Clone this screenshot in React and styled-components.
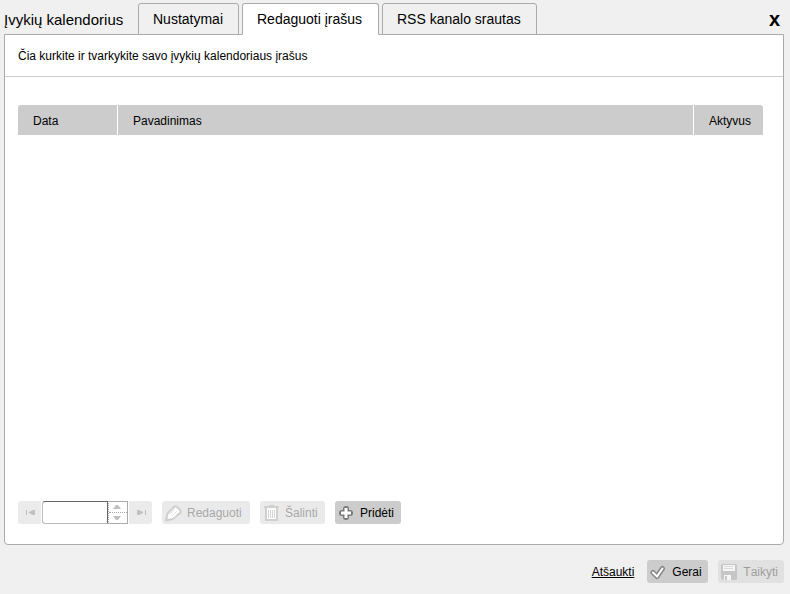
import React, { useState } from "react";
import styled, { createGlobalStyle } from "styled-components";

const GlobalStyle = createGlobalStyle`
  *, *::before, *::after { box-sizing: border-box; }
  body {
    margin: 0;
    background: #f0f0f0;
    color: #000;
    font: 12px/14px "Liberation Sans", Arial, sans-serif;
    font-kerning: none;
  }
  button, input { font: inherit; font-kerning: none; color: inherit; }
`;

const Dialog = styled.div`
  display: flex;
  flex-direction: column;
  min-height: 100vh;
  padding: 3px 6px 11px 4px;
`;

const TopBar = styled.header`
  display: flex;
  align-items: flex-start;
`;

const Title = styled.h1`
  min-width: 134px;
  margin: 8px 0 0;
  font-size: 15px;
  line-height: 18px;
  font-weight: normal;
  white-space: nowrap;
`;

const Tabs = styled.nav`
  display: flex;
  gap: 3px;
  flex: 1;
`;

const Tab = styled.button`
  height: 32px;
  min-width: ${(p) => p.$minWidth};
  margin-bottom: -1px;
  padding: 0 14px;
  border: 1px solid #aaa;
  border-bottom-color: ${(p) => (p.$active ? "#fff" : "#aaa")};
  border-radius: 3px 3px 0 0;
  background: ${(p) => (p.$active ? "#fff" : "#f0f0f0")};
  font-size: 14px;
  line-height: 30px;
  text-align: left;
  white-space: nowrap;
  z-index: 1;
`;

const CloseButton = styled.button`
  margin: 4px 4px 0 0;
  padding: 0;
  border: 0;
  background: none;
  font-size: 20px;
  line-height: 24px;
  font-weight: bold;
`;

const Panel = styled.main`
  display: flex;
  flex-direction: column;
  flex: 1;
  border: 1px solid #aaa;
  border-radius: 0 0 4px 4px;
  background: #fff;
`;

const Intro = styled.p`
  margin: 0;
  padding: 14px 13px 13px;
  border-bottom: 1px solid #ccc;
`;

const Content = styled.div`
  display: flex;
  flex-direction: column;
  justify-content: space-between;
  flex: 1;
  padding: 28px 20px 20px 13px;
`;

const Table = styled.table`
  width: 100%;
  border-collapse: separate;
  border-spacing: 0;
  table-layout: fixed;
`;

const HeadCell = styled.th`
  width: ${(p) => p.$width || "auto"};
  height: 30px;
  padding: 2px 0 0 15px;
  background: #ccc;
  font-weight: normal;
  text-align: left;
  border-right: 1px solid #fff;
  &:first-child { border-top-left-radius: 3px; }
  &:last-child { border-top-right-radius: 3px; border-right: 0; }
`;

const Toolbar = styled.div`
  display: flex;
  gap: 10px;
`;

const Pager = styled.div`
  display: flex;
  gap: 1px;
`;

const PagerButton = styled.button`
  display: flex;
  align-items: center;
  justify-content: center;
  width: 23px;
  height: 23px;
  padding: 0 0 0 2px;
  border: 0;
  border-radius: ${(p) => (p.$end ? "0 3px 3px 0" : "3px 0 0 3px")};
  background: #ebebeb;
`;

const PageField = styled.div`
  display: flex;
`;

const PageInput = styled.input`
  width: 66px;
  height: 23px;
  padding: 0 4px;
  border: 1px solid #bbb;
  border-top-color: #666;
  border-right-color: #666;
  border-radius: 3px 0 0 3px;
  background: #fff;
`;

const Spinner = styled.div`
  display: flex;
  flex-direction: column;
  width: 20px;
  height: 23px;
  border: 1px solid #aaa;
  border-left: 1px dotted #aaa;
`;

const SpinButton = styled.button`
  display: flex;
  flex: 1;
  align-items: center;
  justify-content: center;
  padding: 0 2px 0 0;
  border: 0;
  background: none;
  & + & { border-top: 1px dotted #aaa; }
`;

const ActionButton = styled.button`
  display: flex;
  align-items: center;
  gap: 5px;
  height: 23px;
  min-width: ${(p) => p.$minWidth};
  padding: 1px 6px 0 3px;
  border: 0;
  border-radius: 3px;
  background: #ccc;
  white-space: nowrap;
  &:disabled { opacity: 0.4; color: #222; }
`;

const Icon = styled.svg`
  display: block;
  flex: none;
`;

const Footer = styled.footer`
  display: flex;
  align-items: center;
  justify-content: flex-end;
  gap: 10px;
  padding-top: 15px;
`;

const CancelLink = styled.a`
  margin: 1px 3px 0 0;
  color: #000;
  text-decoration: underline;
`;

const PencilIcon = () => (
  <Icon width="17" height="17" viewBox="0 0 17 17" aria-hidden="true">
    <path d="M1 15.5 2.5 8.5 9.5 1.5h2l4 4v2L8 14Z" fill="#fff" stroke="#888" strokeWidth="2" strokeLinejoin="round" />
    <path d="m5 9 5-5m-3 7 5-5m-3 7 4-5" stroke="#bbb" fill="none" />
    <path d="m0 16 1-4 3 3Z" fill="#888" />
  </Icon>
);

const TrashIcon = () => (
  <Icon width="17" height="17" viewBox="0 0 17 17" aria-hidden="true">
    <path d="M1 1h5V0h5v1h5v2H1Z" fill="#888" />
    <path d="M3 3v12h11V3" fill="#fff" stroke="#888" strokeWidth="2" />
    <path d="M3 15h11" stroke="#888" strokeWidth="2" />
    <path d="M5.5 5v8m2-8v8m2-8v8m2-8v8" stroke="#999" fill="none" />
  </Icon>
);

const PlusIcon = () => (
  <Icon width="17" height="17" viewBox="0 0 17 17" aria-hidden="true">
    <path d="M8 4v8M4 8h8" fill="none" stroke="#777" strokeWidth="6" strokeLinejoin="round" strokeLinecap="round" />
    <path d="M8 3v10M3 8h10" fill="none" stroke="#fff" strokeWidth="3" />
  </Icon>
);

const CheckIcon = () => (
  <Icon width="17" height="17" viewBox="0 0 17 17" aria-hidden="true">
    <path d="m3 8.5 4 4 5.5-8" fill="none" stroke="#888" strokeWidth="5" strokeLinejoin="round" strokeLinecap="round" />
    <path d="m3 8.5 4 4 5.5-8" fill="none" stroke="#fff" strokeWidth="2" strokeLinecap="round" />
  </Icon>
);

const SaveIcon = () => (
  <Icon width="17" height="17" viewBox="0 0 17 17" aria-hidden="true">
    <path d="M1 0h14l1 1v14l-1 1H2l-2-2V1Z" fill="#888" />
    <path d="M2 1h12v6H2Zm1 10h7v5H3Z" fill="#fff" />
    <path d="M3 2.5h9m-9 2h9" stroke="#bbb" />
    <path d="M4 12h2v4H4Z" fill="#888" />
  </Icon>
);

const StepIcon = ({ forward }) => (
  <Icon width="9" height="5" viewBox="0 0 9 5" aria-hidden="true">
    {forward ? (
      <path d="M0 0h2l2 1 2 1v1L4 4 2 5H0Zm8 0h1v5H8Z" fill="#c0c0c0" />
    ) : (
      <path d="M9 0H7L5 1 3 2v1l2 1 2 1h2ZM1 0H0v5h1Z" fill="#c0c0c0" />
    )}
  </Icon>
);

const ArrowIcon = ({ down }) => (
  <Icon width="8" height="4" viewBox="0 0 8 4" aria-hidden="true">
    <path d={down ? "M0 0h8L5 4H3Z" : "M0 4h8L5 0H3Z"} fill="#c0c0c0" />
  </Icon>
);

const TABS = [
  { label: "Nustatymai", minWidth: "101px" },
  { label: "Redaguoti įrašus", minWidth: "137px" },
  { label: "RSS kanalo srautas", minWidth: "155px" },
];

export default function App() {
  const [active, setActive] = useState(1);
  const [page, setPage] = useState("");

  return (
    <>
      <GlobalStyle />
      <Dialog>
        <TopBar>
          <Title>Įvykių kalendorius</Title>
          <Tabs>
            {TABS.map((tab, i) => (
              <Tab
                key={tab.label}
                type="button"
                $active={i === active}
                $minWidth={tab.minWidth}
                onClick={() => setActive(i)}
              >
                {tab.label}
              </Tab>
            ))}
          </Tabs>
          <CloseButton type="button">x</CloseButton>
        </TopBar>
        <Panel>
          <Intro>Čia kurkite ir tvarkykite savo įvykių kalendoriaus įrašus</Intro>
          <Content>
            <Table>
              <thead>
                <tr>
                  <HeadCell $width="100px">Data</HeadCell>
                  <HeadCell>Pavadinimas</HeadCell>
                  <HeadCell $width="69px">Aktyvus</HeadCell>
                </tr>
              </thead>
            </Table>
            <Toolbar>
              <Pager>
                <PagerButton type="button" disabled aria-label="Pirmas">
                  <StepIcon />
                </PagerButton>
                <PageField>
                  <PageInput aria-label="Puslapis" value={page} onChange={(e) => setPage(e.target.value)} />
                  <Spinner>
                    <SpinButton type="button" aria-label="Daugiau"><ArrowIcon /></SpinButton>
                    <SpinButton type="button" aria-label="Mažiau"><ArrowIcon down /></SpinButton>
                  </Spinner>
                </PageField>
                <PagerButton type="button" disabled $end aria-label="Paskutinis">
                  <StepIcon forward />
                </PagerButton>
              </Pager>
              <ActionButton type="button" disabled $minWidth="88px"><PencilIcon />Redaguoti</ActionButton>
              <ActionButton type="button" disabled $minWidth="65px"><TrashIcon />Šalinti</ActionButton>
              <ActionButton type="button" $minWidth="66px"><PlusIcon />Pridėti</ActionButton>
            </Toolbar>
          </Content>
        </Panel>
        <Footer>
          <CancelLink href="#">Atšaukti</CancelLink>
          <ActionButton type="button" $minWidth="61px"><CheckIcon />Gerai</ActionButton>
          <ActionButton type="button" disabled $minWidth="65px"><SaveIcon />Taikyti</ActionButton>
        </Footer>
      </Dialog>
    </>
  );
}
